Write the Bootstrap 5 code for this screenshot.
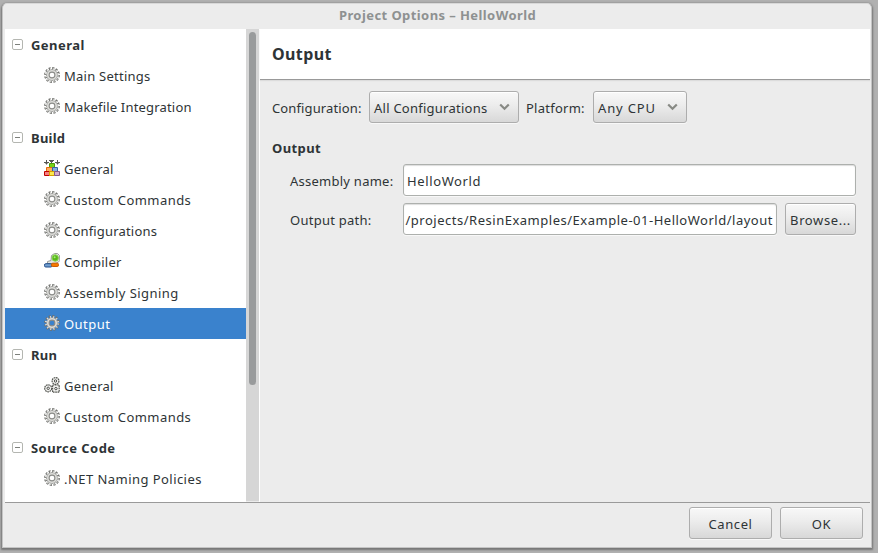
<!DOCTYPE html>
<html lang="en">
<head>
<meta charset="utf-8">
<title>Project Options – HelloWorld</title>
<link rel="stylesheet" href="https://cdn.jsdelivr.net/npm/bootstrap@5.3.0/dist/css/bootstrap.min.css">
<style>
html,body{height:100%}
body{background:#b0b0b0;color:#2e3436;font:13px/20px "Noto Sans","Open Sans",sans-serif;letter-spacing:.25px;overflow:hidden;padding:3px 6px 5px 2px}
.window{background:#ececec;border:1px solid #c4c4c4;border-top-color:#d8d8d8;border-radius:5px 5px 0 0;box-shadow:0 1px 2px 1px #777;padding:0 1px 0 2px}
.title-row{height:25px;color:#8e9191;font-weight:700;line-height:23px;letter-spacing:.42px}
.main-area{height:474px;border-bottom:1px solid #9a9a9a}
.tree{width:241px;background:#fff}
.tree-row{height:31px;padding-left:39px;padding-top:1px;gap:4px}
.tree-head{padding-left:7px;gap:8px;font-weight:700}
.tree-row.active{background:#3a82cd;color:#fff}
.spaced{letter-spacing:.45px}
.snug{letter-spacing:.18px}
.tree svg{width:16px;height:16px;flex:none;margin-top:-3px}
.tree .toggle{width:11px;height:11px;margin-top:-2px}
.track{width:13px;height:472px;background:#d6d6d6;padding:3px 3px 0}
.thumb{width:7px;height:353px;border-radius:4px;background:#999b9c}
.pane{border-left:1px solid #fff;min-width:0}
.pane-head{height:51px;background:#fff;border-bottom:1px solid #999;box-shadow:0 1px 1px #dcdcdc;font-size:16px;font-weight:700;padding-left:12px;letter-spacing:.4px}
.pane-body{padding:11px 14px 0 12px}
.gtk-btn{--bs-btn-padding-x:4px;--bs-btn-padding-y:0;--bs-btn-font-size:13px;--bs-btn-line-height:20px;--bs-btn-border-radius:3px;--bs-btn-color:#2e3436;--bs-btn-border-color:#adadad;height:32px;letter-spacing:inherit;padding-top:2px;background:linear-gradient(#f8f8f8,#ececec 45%,#d8d8d8);box-shadow:inset 0 1px #fff,0 1px #f8f8f8;white-space:nowrap}
.combo-a{width:150px}
.combo-b{width:94px;letter-spacing:.85px}
.combo-a svg,.combo-b svg{width:11px;height:8px;margin:-3px 4px 0 0}
.lab-a{width:97px;letter-spacing:.12px;padding-top:2px}
.lab-b{width:74px;padding:2px 0 0 7px}
.section-name{margin:15px 0 6px;letter-spacing:.4px}
.field-row{margin-bottom:7px}
.field-label{width:131px;padding:2px 0 0 18px}
.form-control.gtk-field{height:32px;border:1px solid #adb0ad;border-radius:3px;padding:2px 3px 0;font-size:13px;line-height:20px;color:#2e3436;box-shadow:inset 0 1px 1px #ddd,0 1px #f8f8f8;white-space:nowrap;overflow:hidden;letter-spacing:.62px}
.form-control.path-field{letter-spacing:.51px;padding-left:1px}
.browse{width:71px;letter-spacing:.6px}
.dlg-btn{width:83px;letter-spacing:.6px}
.actions{padding:4px 7px 0 0}
</style>
<script src="https://cdn.jsdelivr.net/npm/bootstrap@5.3.0/dist/js/bootstrap.bundle.min.js"></script>
</head>
<body>
<svg class="d-none">
<defs>
<symbol id="gear" viewBox="0 0 16 16">
<circle cx="8" cy="8" r="6.700" fill="none" stroke="#6f706d" stroke-width="2.400" stroke-dasharray="2.100 1.408"/>
<circle cx="8" cy="8" r="5.500" fill="#dededb" stroke="#8d8e8b" stroke-width=".8"/>
<circle cx="8" cy="8" r="6.200" fill="none" stroke="#dededb" stroke-width="1.900" stroke-dasharray="1.050 2.196" stroke-dashoffset="-.48"/>
<circle cx="8" cy="8" r="2.900" fill="var(--hole,#fff)" stroke="#8a8b88" stroke-width="1.100"/>
</symbol>
<symbol id="minus" viewBox="0 0 11 11"><rect x=".5" y=".5" width="10" height="10" rx="1.500" fill="#fff" stroke="#b4b6b1"/><path d="M3 5.500h5" stroke="#7d807b"/></symbol>
<symbol id="bricks" viewBox="0 0 16 16">
<path d="M0 2.500h5M2.500 0v4.500M5 .5h5M6 1.500h3M7.500 0v3M11 2.500h5M13.500 0v4.500M1.500 3.500h2M12.500 3.500h2" stroke="#555753" fill="none"/>
<path d="M5.500 3.500h5v4h-5z" fill="#73d216" stroke="#4e9a06"/>
<path d="M2.500 7.500h6v4h-6z" fill="#fcaf5e" stroke="#e8690b"/><path d="M8.500 7.500h5v4h-5z" fill="#84afe0" stroke="#3465a4"/>
<path d="M.5 11.500h5v4h-5z" fill="#f58080" stroke="#c00000"/><path d="M5.500 11.500h5v4h-5z" fill="#fce94f" stroke="#d5a000"/><path d="M10.500 11.500h5v4h-5z" fill="#d3abd0" stroke="#855a88"/>
</symbol>
<symbol id="compile" viewBox="0 0 16 16">
<path d="M3.500 10.500V8.500l3.500-1 .5-5 3-2h3l2 2 .3 5-1.800 2-3 1z" fill="#e4e5e2" stroke="#9b9d98"/>
<circle cx="11.200" cy="5" r="3.200" fill="#58b81a" stroke="#8ad653"/><circle cx="10.600" cy="4.300" r="1" fill="#a6e67a"/>
<rect x=".5" y="10.700" width="7.500" height="3.300" rx="1.300" fill="#729fcf" stroke="#204a87"/><rect x="7.500" y="10.200" width="7" height="3.300" rx="1.300" fill="#f57900" stroke="#ce5c00"/>
</symbol>
<symbol id="gears" viewBox="0 0 16 16">
<g fill="#f2f2f0" stroke="#555752" stroke-width="1.200" stroke-dasharray="1.700 .6"><circle cx="11.500" cy="4" r="3.400"/><circle cx="4.200" cy="11.300" r="3.500"/><rect x="8.600" y="8" width="6.600" height="7.200"/></g>
<g fill="#fff" stroke="#4a4c48"><circle cx="11.500" cy="4" r="1.200"/><circle cx="4.200" cy="11.300" r="1.200"/><circle cx="11.900" cy="11.600" r="1.200"/></g>
</symbol>
<symbol id="chev" viewBox="0 0 11 8"><path d="M1.200 1.500 5.500 5.800 9.800 1.500" fill="none" stroke="#888a85" stroke-width="2.200"/></symbol>
</defs>
</svg>
<div class="window h-100 d-flex flex-column">
<div class="title-row text-center">Project Options – HelloWorld</div>
<div class="main-area d-flex flex-shrink-0">
<div class="tree overflow-hidden flex-shrink-0">
<div class="tree-row tree-head d-flex align-items-center spaced"><svg class="toggle"><use href="#minus"/></svg>General</div>
<div class="tree-row d-flex align-items-center"><svg><use href="#gear"/></svg>Main Settings</div>
<div class="tree-row d-flex align-items-center snug"><svg><use href="#gear"/></svg>Makefile Integration</div>
<div class="tree-row tree-head d-flex align-items-center"><svg class="toggle"><use href="#minus"/></svg>Build</div>
<div class="tree-row d-flex align-items-center"><svg><use href="#bricks"/></svg>General</div>
<div class="tree-row d-flex align-items-center spaced"><svg><use href="#gear"/></svg>Custom Commands</div>
<div class="tree-row d-flex align-items-center snug"><svg><use href="#gear"/></svg>Configurations</div>
<div class="tree-row d-flex align-items-center"><svg><use href="#compile"/></svg>Compiler</div>
<div class="tree-row d-flex align-items-center spaced"><svg><use href="#gear"/></svg>Assembly Signing</div>
<div class="tree-row active d-flex align-items-center spaced" style="--hole:#3a82cd"><svg><use href="#gear"/></svg>Output</div>
<div class="tree-row tree-head d-flex align-items-center"><svg class="toggle"><use href="#minus"/></svg>Run</div>
<div class="tree-row d-flex align-items-center"><svg><use href="#gears"/></svg>General</div>
<div class="tree-row d-flex align-items-center spaced"><svg><use href="#gear"/></svg>Custom Commands</div>
<div class="tree-row tree-head d-flex align-items-center spaced"><svg class="toggle"><use href="#minus"/></svg>Source Code</div>
<div class="tree-row d-flex align-items-center spaced"><svg><use href="#gear"/></svg>.NET Naming Policies</div>
</div>
<div class="track flex-shrink-0"><div class="thumb"></div></div>
<div class="pane flex-grow-1">
<div class="pane-head d-flex align-items-center">Output</div>
<div class="pane-body">
<div class="d-flex align-items-center">
<span class="lab-a">Configuration:</span>
<button class="btn gtk-btn combo-a d-flex align-items-center justify-content-between">All Configurations<svg><use href="#chev"/></svg></button>
<span class="lab-b">Platform:</span>
<button class="btn gtk-btn combo-b d-flex align-items-center justify-content-between">Any CPU<svg><use href="#chev"/></svg></button>
</div>
<div class="fw-bold section-name">Output</div>
<div class="d-flex align-items-center field-row">
<span class="field-label flex-shrink-0">Assembly name:</span>
<div class="form-control gtk-field d-flex align-items-center">HelloWorld</div>
</div>
<div class="d-flex align-items-center">
<span class="field-label flex-shrink-0">Output path:</span>
<div class="form-control gtk-field path-field d-flex align-items-center justify-content-end">/projects/ResinExamples/Example-01-HelloWorld/layout</div>
<button class="btn gtk-btn browse flex-shrink-0 ms-2">Browse...</button>
</div>
</div>
</div>
</div>
<div class="actions d-flex justify-content-end gap-2">
<button class="btn gtk-btn dlg-btn">Cancel</button>
<button class="btn gtk-btn dlg-btn">OK</button>
</div>
</div>
</body>
</html>
